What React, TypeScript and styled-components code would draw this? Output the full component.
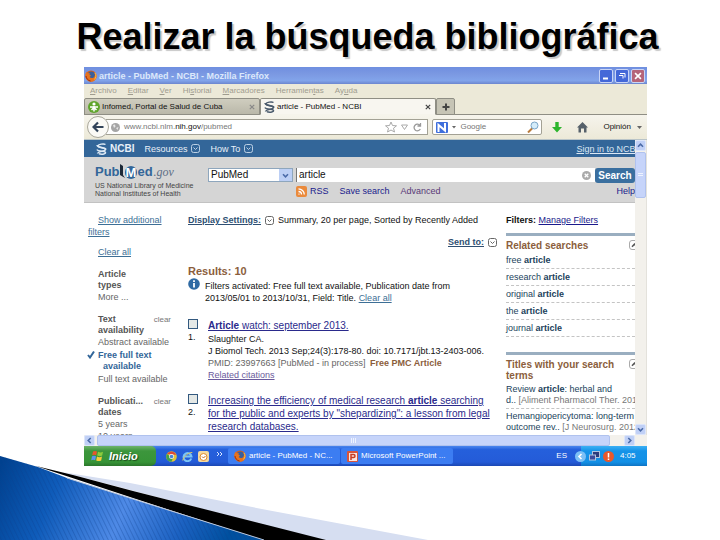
import React from "react";
import styled, { createGlobalStyle, css } from "styled-components";

const Global = createGlobalStyle`
  *, *::before, *::after { box-sizing: border-box; }
  html, body { margin: 0; padding: 0; }
  body { background: #fff; font-family: "Liberation Sans", Arial, sans-serif; font-size: 9px; line-height: 12px; color: #111; }
  button, input, select { font: inherit; color: inherit; margin: 0; padding: 0; border: 0; background: none; border-radius: 0; }
  h1, h2, h3, p, ul { margin: 0; padding: 0; font: inherit; list-style: none; }
  svg { display: block; flex: none; }
`;

const Slide = styled.main`
  position: relative;
  min-height: 100vh;
  padding: 16px 73px 0 84px;
  overflow: hidden;
`;

const SlideTitle = styled.h1`
  && { font-size: 36px; line-height: 42px; font-weight: 700; margin: 0 -24px 9px -20px; }
  color: #000;
  text-align: center;
  white-space: nowrap;
  text-shadow: 2px 2px 1px #c8c8c8;
`;

const Swoosh = styled.svg`
  position: absolute;
  left: 0;
  bottom: 0;
`;

const Screen = styled.section`
  position: relative;
  display: flex;
  flex-direction: column;
  min-width: 0;
`;

const TitleBar = styled.header`
  display: flex;
  align-items: center;
  height: 17px;
  padding: 0 2px 0 1px;
  gap: 2px;
  color: #dce8fb;
  font-weight: 700;
  white-space: nowrap;
  background: linear-gradient(#6f8fe0, #7b98e2 40%, #82a4ea 80%, #6c86cf);
`;

const Grow = styled.span`
  flex: 1;
`;

const WinButton = styled.button<{ $close?: boolean }>`
  && {
    display: grid;
    place-items: center;
    width: 14px;
    height: 14px;
    border: 1px solid #c9d5f6;
    border-radius: 2px;
    background: ${(p) => (p.$close ? "#b5657a" : "#4468d8")};
  }
`;

const MenuBar = styled.nav`
  display: flex;
  gap: 11px;
  height: 14px;
  padding: 0 6px;
  align-items: center;
  font-size: 8px;
  background: #ece9d8;
`;

const MenuItem = styled.button`
  && { color: #9f9c8f; }
  line-height: 14px;
  u { text-decoration-thickness: 1px; }
`;

const TabBar = styled.div`
  display: flex;
  height: 17px;
  font-size: 8px;
  background: #ece9d8;
  border-bottom: 1px solid #8f8e84;
`;

const Tab = styled.button<{ $active?: boolean }>`
  && {
    display: flex;
    align-items: center;
    gap: 2px;
    flex: 0 1 176px;
    padding: 0 4px 0 3px;
    height: 17px;
    white-space: nowrap;
    color: #111;
    border: 1px solid #8f8e84;
    border-bottom-color: ${(p) => (p.$active ? "#f6f4ec" : "#8f8e84")};
    border-radius: 2px 2px 0 0;
    background: ${(p) => (p.$active ? "#f8f6f0" : "linear-gradient(#cfcdbf, #bab8a9)")};
  }
`;

const NewTab = styled(Tab)`
  && { flex: 0 0 19px; justify-content: center; padding: 0; background: #c6c4b5; border-bottom-color: #8f8e84; }
`;

const NavBar = styled.div`
  display: flex;
  align-items: center;
  height: 25px;
  padding: 0 5px 0 3px;
  font-size: 8px;
  background: linear-gradient(#f6f4ec, #ece9d8);
  border-bottom: 1px solid #b9c4c8;
`;

const BackButton = styled.button`
  && {
    display: grid;
    place-items: center;
    width: 22px;
    height: 22px;
    border: 1px solid #a9a79b;
    border-radius: 50%;
    background: #fbfaf6;
    z-index: 1;
  }
`;

const Field = styled.label<{ $search?: boolean }>`
  display: flex;
  align-items: center;
  gap: 4px;
  height: 16px;
  min-width: 0;
  background: #fff;
  border: 1px solid #a3a195;
  ${(p) =>
    p.$search
      ? css`flex: 0 0 110px; margin-left: 4px; padding: 0 2px 0 3px; border-radius: 2px;`
      : css`flex: 1; margin-left: -3px; padding: 0 4px 0 5px; border-left: 0;`}
  input { flex: 1; min-width: 0; width: 0; outline: 0; }
`;

const Url = styled.a`
  flex: 1;
  color: #777;
  text-decoration: none;
  b { color: #111; font-weight: 400; }
`;

const Plain = styled.button`
  display: grid;
  place-items: center;
`;

const NavTools = styled.div`
  display: flex;
  align-items: center;
  gap: 15px;
  padding-left: 10px;
`;

const Opinion = styled.button`
  display: flex;
  align-items: center;
  gap: 6px;
`;

const Viewport = styled.div`
  display: grid;
  grid-template-columns: minmax(0, 1fr) 12px;
`;

const Page = styled.div`
  overflow: hidden;
  background: #fff;
  height: 295px;
`;

const NcbiBar = styled.div`
  display: flex;
  align-items: center;
  gap: 10px;
  height: 17px;
  padding-left: 12px;
  color: #e8f0f8;
  background: #336699;
  white-space: nowrap;
`;

const NcbiLogo = styled.a`
  display: flex;
  align-items: center;
  gap: 3px;
  color: #e8f0f8;
  font-size: 10px;
  font-weight: 700;
  text-decoration: none;
`;

const NcbiMenu = styled.button`
  display: flex;
  align-items: center;
  gap: 4px;
`;

const SignIn = styled.a`
  margin-left: auto;
  margin-right: -3px;
  color: #dce8f4;
`;

const SearchBand = styled.form`
  display: grid;
  grid-template-columns: 124px minmax(0, 1fr) 40px;
  height: 46px;
  background: #d5d5d5;
  border-bottom: 1px solid #c2c2c2;
`;

const Brand = styled.div`
  padding: 5px 0 0 11px;
  font-size: 7px;
  line-height: 8px;
  color: #444;
  white-space: nowrap;
`;

const PubMed = styled.a`
  display: flex;
  align-items: center;
  height: 20px;
  color: #336699;
  font-size: 13px;
  font-weight: 700;
  text-decoration: none;
  i { margin-left: 1px; font: italic 12px "Liberation Serif", serif; color: #5d6f86; }
`;

const BigM = styled.span`
  padding: 0 1px;
  line-height: 13px;
  color: #fff;
  border-radius: 6px;
  background: #336699;
`;

const SearchMiddle = styled.div`
  display: flex;
  flex-direction: column;
  padding-top: 11px;
  gap: 3px;
`;

const SearchLine = styled.div`
  display: flex;
  gap: 3px;
`;

const DbWrap = styled.div`
  display: grid;
  grid-template-columns: 70px 13px;
  height: 14px;
  font-size: 10px;
  border: 1px solid #8ea6bd;
  background: #fff;
  select { grid-area: 1 / 1 / 2 / 3; appearance: none; padding-left: 2px; line-height: 12px; outline: 0; }
`;

const DropArrow = styled.span`
  grid-area: 1 / 2;
  display: grid;
  place-items: center;
  background: #bccff5;
  pointer-events: none;
`;

const TermField = styled.div`
  display: flex;
  align-items: center;
  flex: 1;
  min-width: 0;
  height: 14px;
  padding: 0 4px 0 2px;
  font-size: 10px;
  border-left: 1px solid #777;
  background: #fff;
  input { flex: 1; min-width: 0; outline: 0; }
`;

const LinkLine = styled.div`
  display: flex;
  align-items: center;
  gap: 11px;
  padding-left: 88px;
  white-space: nowrap;
`;

const ToolLink = styled.a<{ $visited?: boolean }>`
  display: flex;
  align-items: center;
  gap: 3px;
  color: ${(p) => (p.$visited ? "#5a3a78" : "#1a1a8c")};
  text-decoration: none;
`;

const SearchSide = styled.div`
  display: flex;
  flex-direction: column;
  align-items: flex-end;
  gap: 2px;
  padding-top: 11px;
  a { color: #1a1a8c; text-decoration: none; }
`;

const SearchButton = styled.button`
  && {
    width: 40px;
    height: 15px;
    font-size: 10px;
    font-weight: 700;
    color: #fff;
    border-radius: 3px;
    background: #3a6f9f;
  }
`;

const Columns = styled.div`
  display: grid;
  grid-template-columns: 104px minmax(0, 1fr) 129px;
  padding-top: 11px;
  white-space: nowrap;
`;

const Sidebar = styled.aside`
  padding: 0 10px 0 14px;
  color: #666;
`;

const SideLink = styled.a<{ $hang?: boolean }>`
  display: block;
  color: #3d6f96;
  margin-bottom: 8px;
  ${(p) => p.$hang && css`margin-left: -10px; text-indent: 10px;`}
`;

const FilterGroup = styled.section`
  margin-top: 11px;
`;

const FilterHead = styled.h3`
  && { font-weight: 700; line-height: 11px; }
  display: flex;
  justify-content: space-between;
  color: #555;
  a { font-weight: 400; font-size: 8px; color: #777; text-decoration: none; margin-right: 7px; }
`;

const FilterItem = styled.a<{ $on?: boolean }>`
  display: flex;
  gap: 3px;
  color: #666;
  text-decoration: none;
  ${(p) =>
    p.$on &&
    css`
      color: #336699;
      font-weight: 700;
      line-height: 11px;
      margin: 1px 0 1px -11px;
      padding: 1px 0 0;
      span { padding-left: 5px; text-indent: -5px; }
    `}
`;

const Results = styled.section`
  padding-right: 9px;
`;

const SettingsLine = styled.div<{ $end?: boolean }>`
  display: flex;
  align-items: center;
  gap: 4px;
  justify-content: ${(p) => (p.$end ? "flex-end" : "flex-start")};
  margin-bottom: ${(p) => (p.$end ? 16 : 10)}px;
  a { font-weight: 700; color: #2f4f72; }
`;

const ResultsTitle = styled.h2`
  && { font-size: 11px; line-height: 14px; font-weight: 700; }
  color: #8b5e3c;
`;

const Notice = styled.div`
  display: flex;
  gap: 5px;
  margin-bottom: 15px;
  p { padding-top: 2px; }
  a { color: #3d6f96; }
`;

const Result = styled.article`
  display: grid;
  grid-template-columns: 15px minmax(0, 1fr);
  column-gap: 5px;
  margin-bottom: 13px;
`;

const Pick = styled.label`
  display: flex;
  flex-direction: column;
  gap: 2px;
  input { appearance: none; width: 10px; height: 10px; border: 1px solid #33597f; background: #e4e8e6; }
`;

const ResultLink = styled.a`
  display: block;
  font-size: 10px;
  line-height: 13px;
  color: #2a2a8c;
  margin-bottom: 1px;
`;

const ResultText = styled.p<{ $muted?: boolean }>`
  color: ${(p) => (p.$muted ? "#666" : "#111")};
  b { color: #8b5e3c; margin-left: 2px; }
  a { color: #6a5a9c; }
`;

const Discovery = styled.aside`
  a { color: #223f5c; text-decoration: none; }
`;

const FiltersLine = styled.p`
  && { margin-bottom: 7px; }
  a { color: #1a1a8c; text-decoration: underline; }
`;

const Portlet = styled.section`
  border-top: 3px solid #9aaec0;
  padding-top: 4px;
  margin-bottom: 15px;
`;

const PortletTitle = styled.h3`
  && { font-size: 10px; line-height: 11px; font-weight: 700; margin-bottom: 1px; }
  display: flex;
  justify-content: space-between;
  align-items: flex-start;
  color: #8b5e3c;
`;

const Collapse = styled.button`
  && { border: 1px solid #aaa; border-radius: 3px; }
  display: grid;
  place-items: center;
  width: 10px;
  height: 10px;
  margin-right: -4px;
`;

const PortletRow = styled.li<{ $tight?: boolean }>`
  padding: 2px 0;
  border-bottom: 1px dashed #c4c4c4;
  line-height: ${(p) => (p.$tight ? 11 : 12)}px;
  span { color: #777; }
`;

const VScroll = styled.div`
  display: flex;
  flex-direction: column;
  gap: 1px;
  background: #f3f1ec;
  border-right: 1px solid #e4e2dc;
`;

const HScroll = styled.div`
  display: flex;
  gap: 2px;
  height: 11px;
  padding-right: 12px;
  background: #f3f1ec;
`;

const ScrollButton = styled.button`
  && { display: grid; place-items: center; width: 11px; height: 11px; border: 1px solid #dce5fb; border-radius: 2px; background: #c0d0f6; }
`;

const Thumb = styled.div<{ $vertical?: boolean }>`
  display: grid;
  place-items: center;
  border: 1px solid #b0c2ee;
  border-radius: 2px;
  background: #c6d4fa;
  ${(p) => (p.$vertical ? css`height: 46px; width: 11px;` : css`flex: 1; margin-right: 12px;`)}
`;

const Taskbar = styled.footer`
  display: flex;
  align-items: stretch;
  height: 20px;
  color: #fff;
  white-space: nowrap;
  background: linear-gradient(#4a86ee, #2560dc 18%, #245bd8 80%, #1c48b4);
`;

const Start = styled.button`
  && {
    display: flex;
    align-items: center;
    gap: 5px;
    width: 72px;
    padding-left: 7px;
    font-size: 11px;
    font-style: italic;
    font-weight: 700;
    color: #fff;
    text-shadow: 1px 1px 1px #1c4a1c;
    border-radius: 0 5px 5px 0;
    background: linear-gradient(#6fb46c, #3c963c 25%, #379437 80%, #2b762b);
  }
`;

const QuickLaunch = styled.div`
  display: flex;
  align-items: center;
  gap: 5px;
  width: 72px;
  padding-left: 10px;
`;

const Task = styled.button`
  && {
    display: flex;
    align-items: center;
    gap: 3px;
    flex: 0 1 112px;
    min-width: 0;
    margin: 2px 1px 2px 0;
    padding-left: 6px;
    font-size: 8px;
    color: #fff;
    border-radius: 2px;
    background: #3c7df2;
  }
`;

const Lang = styled.span`
  align-self: center;
  margin: 0 14px 0 auto;
  font-size: 8px;
`;

const Tray = styled.div`
  display: flex;
  align-items: center;
  gap: 3px;
  width: 66px;
  font-size: 8px;
  background: linear-gradient(#3cb0f4, #1593e8 25%, #1290e6 80%, #0f74c4);
  time { margin-left: 3px; }
  svg:first-child { margin-left: -6px; }
`;

const FirefoxIcon = () => (
  <svg width="12" height="12" viewBox="0 0 12 12">
    <circle cx="6" cy="6" r="5.6" fill="#d9601a" />
    <circle cx="6.3" cy="5" r="3.6" fill="#3a5f9c" />
    <path d="M.6 3.5 2 1.6l.6 1.6 2.2-.3L4.4 4.5 6 5.5 4.6 7c1 1.4 3 1.4 4.2.4 1.4-1 1.6-3 .8-5 2 1.8 2.4 4.3 1.5 6.2C9.8 11 8.2 11.800 6 11.700 2.200 11.500-.2 8 .6 3.500Z" fill="#e8731c" />
    <path d="M10 2.800c1.400 2.200 1.200 5-.6 6.700" fill="none" stroke="#f7c04a" />
    <path d="M1 6c.3 2.600 2 4.600 4.600 5" fill="none" stroke="#9c2c10" />
  </svg>
);

const DnaIcon = ({ color }: { color: string }) => (
  <svg width="11" height="12" viewBox="0 0 11 12" fill="none" stroke={color} strokeWidth="1.500">
    <path d="M9.500 1.500C8 .5 2 1 2 3s7.500 1.300 7.500 3.500S2 8 1.500 10.500" />
    <path d="M1 2c0 3 8.500 2 9 4.500M1 6.500C2 9 9.500 7.500 9.500 9.500S5 11.500 3 10.800" />
  </svg>
);

const Chevron = ({ color = "#4a6aa8", turn = 0 }: { color?: string; turn?: number }) => (
  <svg width="7" height="7" viewBox="0 0 7 7" fill="none" stroke={color} strokeWidth="1.600">
    <path d="M1 2.300 3.500 4.800 6 2.300" transform={`rotate(${turn} 3.500 3.500)`} />
  </svg>
);

const BoxArrow = ({ color = "#666" }: { color?: string }) => (
  <svg width="9" height="9" viewBox="0 0 9 9" fill="none" stroke={color}>
    <rect x=".5" y=".5" width="8" height="8" rx="2" />
    <path d="M2.500 3.500 4.500 5.500 6.500 3.500" />
  </svg>
);

const CloseX = ({ color, size = 6 }: { color: string; size?: number }) => (
  <svg width={size} height={size} viewBox="0 0 6 6" stroke={color} strokeWidth="1.200">
    <path d="M.8.800 5.200 5.200M5.200.800.800 5.200" />
  </svg>
);

const menus: [string, string, string][] = [
  ["", "A", "rchivo"],
  ["", "E", "ditar"],
  ["", "V", "er"],
  ["Hi", "s", "torial"],
  ["", "M", "arcadores"],
  ["Herramien", "t", "as"],
  ["Ay", "u", "da"],
];

const related = ["free", "research", "original", "the", "journal"];

export default function App() {
  return (
    <Slide>
      <Global />
      <Swoosh width="450" height="84" viewBox="0 0 450 84" aria-hidden="true">
        <defs>
          <linearGradient id="blue" gradientUnits="userSpaceOnUse" x1="0" y1="10" x2="220" y2="100">
            <stop offset="0" stopColor="#00418f" />
            <stop offset=".25" stopColor="#0f5cba" />
            <stop offset=".55" stopColor="#4f8ae6" />
            <stop offset=".8" stopColor="#1c62c2" />
            <stop offset="1" stopColor="#00509f" />
          </linearGradient>
          <pattern id="lines" width="4" height="4" patternUnits="userSpaceOnUse" patternTransform="rotate(-26)">
            <path d="M.5 0V4" stroke="#0a3f8c" strokeWidth="1" opacity=".3" />
          </pattern>
        </defs>
        <path d="M62 16 130 27 267 54 428 84H320Z" fill="#d6def1" />
        <path d="M36 10 73 19 133 35 200 52 267 69 326 84H262L133 42Z" fill="#000" />
        <path d="M0 0 38 11 67 22 133 43 264 84H0Z" fill="url(#blue)" />
        <path d="M0 0 38 11 67 22 133 43 264 84H0Z" fill="url(#lines)" />
        <path d="M67 22 133 43 264 84" stroke="#b9c6dc" strokeWidth="1" fill="none" />
      </Swoosh>
      <SlideTitle>Realizar la búsqueda bibliográfica</SlideTitle>

      <Screen>
        <TitleBar>
          <FirefoxIcon />
          <span>article - PubMed - NCBI - Mozilla Firefox</span>
          <Grow />
          <WinButton aria-label="Minimizar">
            <svg width="8" height="8"><path d="M1 6.500H6" stroke="#fff" strokeWidth="2" /></svg>
          </WinButton>
          <WinButton aria-label="Restaurar">
            <svg width="8" height="8" fill="none" stroke="#fff"><path d="M2 1.500H7V5.500M1 3.500H5V6.500" /></svg>
          </WinButton>
          <WinButton $close aria-label="Cerrar"><CloseX color="#fff" size={8} /></WinButton>
        </TitleBar>
        <MenuBar>
          {menus.map(([a, key, b]) => (
            <MenuItem key={a + key + b}>{a}<u>{key}</u>{b}</MenuItem>
          ))}
        </MenuBar>
        <TabBar>
          <Tab>
            <svg width="12" height="12" viewBox="0 0 12 12">
              <circle cx="6" cy="6" r="6" fill="#5fa52c" />
              <circle cx="6" cy="3" r="1.600" fill="#fff" />
              <path d="M2 6h8M6 5v5.500M3.500 9 6 6.500 8.500 9" stroke="#fff" strokeWidth="1.500" fill="none" />
            </svg>
            Infomed, Portal de Salud de Cuba
            <Grow />
            <CloseX color="#888" />
          </Tab>
          <Tab $active>
            <DnaIcon color="#4a5a6c" />
            article - PubMed - NCBI
            <Grow />
            <CloseX color="#444" />
          </Tab>
          <NewTab aria-label="Nueva pestaña">
            <svg width="8" height="8"><path d="M4 .5V7.500M.5 4H7.500" stroke="#444" strokeWidth="2" /></svg>
          </NewTab>
        </TabBar>
        <NavBar>
          <BackButton aria-label="Atrás">
            <svg width="12" height="12" viewBox="0 0 12 12" fill="none" stroke="#33445a" strokeWidth="2.200"><path d="M11.500 6H2M6 1.500 1.500 6 6 10.500" /></svg>
          </BackButton>
          <Field as="div">
            <svg width="9" height="9" viewBox="0 0 9 9"><circle cx="4.500" cy="4.500" r="4.500" fill="#a5a5a5" /><path d="M2 2 4 1.500 4.500 3.500 3 5ZM5 5 7.500 4 6.500 7Z" fill="#e6e6e6" /></svg>
            <Url href="#url">www.ncbi.nlm.<b>nih.gov</b>/pubmed</Url>
            <svg width="38" height="12" viewBox="0 0 38 12" fill="none" stroke="#aaa">
              <path d="M6 1 7.500 4.500 11.500 4.800 8.500 7.200 9.500 11 6 9 2.500 11 3.500 7.200.500 4.800 4.500 4.500Z" />
              <path d="M16.500 4H22.500L19.500 8.500Z" />
              <path d="M35 4.500A3.300 3.300 0 1 0 35.300 8M35.500 2V5H32.500" stroke="#999" strokeWidth="1.300" />
            </svg>
          </Field>
          <Field $search>
            <svg width="12" height="11"><rect width="12" height="11" rx="1" fill="#3f6fdc" /><path d="M2.500 10V3L9 8.500V1" stroke="#fff" strokeWidth="2" fill="none" /></svg>
            <svg width="4" height="3"><path d="M0 0H4L2 2.500Z" fill="#666" /></svg>
            <input aria-label="Buscar en Google" placeholder="Google" />
            <svg width="12" height="12" fill="none"><path d="M6 6.500 1 11.500" stroke="#b97b3c" strokeWidth="2" /><circle cx="7.500" cy="4.500" r="3.500" fill="#d4ecfa" stroke="#7aa6c8" /></svg>
          </Field>
          <NavTools>
            <Plain aria-label="Descargas"><svg width="10" height="11"><path d="M3.300 0H6.700V5H10L5 10.500 0 5H3.300Z" fill="#2cb52c" /></svg></Plain>
            <Plain aria-label="Inicio"><svg width="11" height="11"><path d="M5.500 0 11 5.500H9.500V10.500H7V6.500H4V10.500H1.500V5.500H0Z" fill="#56616a" /></svg></Plain>
            <Opinion>Opinión <svg width="5" height="3"><path d="M0 0H5L2.500 3Z" fill="#666" /></svg></Opinion>
          </NavTools>
        </NavBar>

        <Viewport>
          <Page>
            <NcbiBar>
              <NcbiLogo href="#ncbi"><DnaIcon color="#dfeaf5" />NCBI</NcbiLogo>
              <NcbiMenu>Resources <BoxArrow color="#bcd0e4" /></NcbiMenu>
              <NcbiMenu>How To <BoxArrow color="#bcd0e4" /></NcbiMenu>
              <SignIn href="#signin">Sign in to NCBI</SignIn>
            </NcbiBar>
            <SearchBand onSubmit={(e) => e.preventDefault()}>
              <Brand>
                <PubMed href="#pubmed">
                  Pub
                  <svg width="5" height="18" viewBox="0 0 5 18"><path d="M0 1 3 3V12L5 15 0 12Z" fill="#1d2a38" /></svg>
                  <BigM>M</BigM>ed<i>.gov</i>
                </PubMed>
                US National Library of Medicine<br />National Institutes of Health
              </Brand>
              <SearchMiddle>
                <SearchLine>
                  <DbWrap>
                    <select aria-label="Base de datos"><option>PubMed</option></select>
                    <DropArrow><Chevron /></DropArrow>
                  </DbWrap>
                  <TermField>
                    <input aria-label="Término" defaultValue="article" />
                    <svg width="9" height="9"><circle cx="4.500" cy="4.500" r="4.500" fill="#aaa" /><path d="M2.700 2.700 6.300 6.300M6.300 2.700 2.700 6.300" stroke="#fff" strokeWidth="1.300" /></svg>
                  </TermField>
                </SearchLine>
                <LinkLine>
                  <ToolLink href="#rss">
                    <svg width="11" height="11" fill="none" stroke="#fff" strokeWidth="1.300"><rect width="11" height="11" rx="2" fill="#ea8a3c" stroke="none" /><path d="M2.500 5.500A3 3 0 0 1 5.500 8.500M2.500 2.800A6 6 0 0 1 8.300 8.500M2.500 8.200H3.500" /></svg>
                    RSS
                  </ToolLink>
                  <ToolLink href="#save">Save search</ToolLink>
                  <ToolLink href="#advanced" $visited>Advanced</ToolLink>
                </LinkLine>
              </SearchMiddle>
              <SearchSide>
                <SearchButton>Search</SearchButton>
                <a href="#help">Help</a>
              </SearchSide>
            </SearchBand>

            <Columns>
              <Sidebar>
                <SideLink $hang href="#more">Show additional<br />filters</SideLink>
                <SideLink href="#clear">Clear all</SideLink>
                <FilterGroup>
                  <FilterHead>Article<br />types</FilterHead>
                  <FilterItem href="#types">More ...</FilterItem>
                </FilterGroup>
                <FilterGroup>
                  <FilterHead><span>Text<br />availability</span><a href="#c1">clear</a></FilterHead>
                  <FilterItem href="#abs">Abstract available</FilterItem>
                  <FilterItem $on href="#free">
                    <svg width="8" height="9" fill="none" stroke="#336699" strokeWidth="2"><path d="M1 5 3 7.500 7 1.500" /></svg>
                    <span>Free full text<br />available</span>
                  </FilterItem>
                  <FilterItem href="#full">Full text available</FilterItem>
                </FilterGroup>
                <FilterGroup>
                  <FilterHead><span>Publicati...<br />dates</span><a href="#c2">clear</a></FilterHead>
                  <FilterItem href="#y5">5 years</FilterItem>
                  <FilterItem href="#y10">10 years</FilterItem>
                </FilterGroup>
              </Sidebar>

              <Results>
                <SettingsLine>
                  <a href="#display">Display Settings:</a><BoxArrow />
                  <span>Summary, 20 per page, Sorted by Recently Added</span>
                </SettingsLine>
                <SettingsLine $end><a href="#send">Send to:</a><BoxArrow /></SettingsLine>
                <ResultsTitle>Results: 10</ResultsTitle>
                <Notice>
                  <svg width="12" height="12"><circle cx="6" cy="6" r="5.800" fill="#2f6aa3" /><path d="M6 5V9.500M6 2.300V4" stroke="#fff" strokeWidth="1.800" /></svg>
                  <p>
                    Filters activated: Free full text available, Publication date from<br />
                    2013/05/01 to 2013/10/31, Field: Title. <a href="#clearall">Clear all</a>
                  </p>
                </Notice>
                <Result>
                  <Pick><input type="checkbox" />1.</Pick>
                  <div>
                    <ResultLink href="#r1"><b>Article</b> watch: september 2013.</ResultLink>
                    <ResultText>Slaughter CA.</ResultText>
                    <ResultText>J Biomol Tech. 2013 Sep;24(3):178-80. doi: 10.7171/jbt.13-2403-006.</ResultText>
                    <ResultText $muted>PMID: 23997663 [PubMed - in process] <b>Free PMC Article</b></ResultText>
                    <ResultText><a href="#cit">Related citations</a></ResultText>
                  </div>
                </Result>
                <Result>
                  <Pick><input type="checkbox" />2.</Pick>
                  <ResultLink href="#r2">
                    Increasing the efficiency of medical research <b>article</b> searching<br />
                    for the public and experts by "shepardizing": a lesson from legal<br />
                    research databases.
                  </ResultLink>
                </Result>
              </Results>

              <Discovery>
                <FiltersLine><b>Filters:</b> <a href="#manage">Manage Filters</a></FiltersLine>
                <Portlet>
                  <PortletTitle>Related searches<Collapse aria-label="Contraer"><Chevron color="#555" turn={180} /></Collapse></PortletTitle>
                  <ul>
                    {related.map((word) => (
                      <PortletRow key={word}><a href={"#" + word}>{word} <b>article</b></a></PortletRow>
                    ))}
                  </ul>
                </Portlet>
                <Portlet>
                  <PortletTitle><span>Titles with your search<br />terms</span><Collapse aria-label="Contraer"><Chevron color="#555" turn={180} /></Collapse></PortletTitle>
                  <ul>
                    <PortletRow $tight><a href="#t1">Review <b>article</b>: herbal and<br />d.. <span>[Aliment Pharmacol Ther. 2012]</span></a></PortletRow>
                    <PortletRow $tight><a href="#t2">Hemangiopericytoma: long-term<br />outcome rev.. <span>[J Neurosurg. 2012]</span></a></PortletRow>
                  </ul>
                </Portlet>
              </Discovery>
            </Columns>
          </Page>
          <VScroll>
            <ScrollButton aria-label="Subir"><Chevron turn={180} /></ScrollButton>
            <Thumb $vertical><svg width="5" height="4"><path d="M0 .5H5M0 2.500H5" stroke="#eef3ff" /></svg></Thumb>
            <Grow />
            <ScrollButton aria-label="Bajar"><Chevron /></ScrollButton>
          </VScroll>
        </Viewport>
        <HScroll>
          <ScrollButton aria-label="Izquierda"><Chevron turn={90} /></ScrollButton>
          <Thumb><svg width="6" height="5"><path d="M.5 0V5M2.500 0V5M4.500 0V5" stroke="#eef3ff" /></svg></Thumb>
          <ScrollButton aria-label="Derecha"><Chevron turn={-90} /></ScrollButton>
        </HScroll>

        <Taskbar>
          <Start>
            <svg width="13" height="12" viewBox="0 0 13 12">
              <path d="M2 1.500Q4 .3 6 1.500L5.200 5.300Q3 4.300 1.200 5.300Z" fill="#e8562c" />
              <path d="M7 1.800Q9.500 3 12 1.800L11.200 5.600Q9 6.800 6.200 5.600Z" fill="#8ccc3c" />
              <path d="M1 6.300Q3 5.300 5 6.300L4.200 10.200Q2 9.200.200 10.200Z" fill="#5c94ec" />
              <path d="M6 6.600Q8.500 7.800 11 6.600L10.200 10.400Q8 11.600 5.200 10.400Z" fill="#f6cc3c" />
            </svg>
            Inicio
          </Start>
          <QuickLaunch>
            <svg width="11" height="11" viewBox="0 0 12 12"><circle cx="6" cy="6" r="5.800" fill="#e2c43a" /><path d="M1 3.200A5.800 5.800 0 0 1 11.300 4H6Z" fill="#dc4a38" /><path d="M1 3.200A5.800 5.800 0 0 0 6 11.800L7.500 8Z" fill="#3fa04c" /><circle cx="6" cy="6" r="2.700" fill="#fff" /><circle cx="6" cy="6" r="2" fill="#4a84d8" /></svg>
            <svg width="11" height="11" fill="none"><path d="M9.300 7.500A4 4 0 1 1 9.500 5.500H2.500" stroke="#7cc4f6" strokeWidth="2" /><path d="M.8 9.500C1 6 7 1 10.300 1.500" stroke="#d8c46a" /></svg>
            <svg width="11" height="11" fill="none"><rect width="11" height="11" rx="2" fill="#f3d9a0" /><circle cx="5.500" cy="6" r="3.500" stroke="#e08a2c" fill="#fff" /><path d="M4 5.500 5.500 7 7.500 5" stroke="#c8701c" /></svg>
            <svg width="9" height="10" fill="none" stroke="#d8e6ff"><path d="M3 1 5 3 3 5M6 1 8 3 6 5" /></svg>
          </QuickLaunch>
          <Task><FirefoxIcon />article - PubMed - NC...</Task>
          <Task>
            <svg width="11" height="11" fill="none"><rect width="11" height="11" rx="1" fill="#d8543c" /><rect x="2" y="2" width="8" height="8" fill="#fbe6e0" /><path d="M4 9V3.500H6.500A1.500 1.500 0 0 1 6.500 6.500H4" stroke="#c83c24" strokeWidth="1.500" /></svg>
            Microsoft PowerPoint ...
          </Task>
          <Lang>ES</Lang>
          <Tray>
            <svg width="11" height="11" fill="none"><circle cx="5.500" cy="5.500" r="5.500" fill="#7cc0f6" /><path d="M6.500 3 4 5.500 6.500 8" stroke="#fff" strokeWidth="1.600" /></svg>
            <svg width="11" height="11"><rect x="3.500" y=".5" width="7" height="6" fill="#2c3c7c" stroke="#b4c4dc" /><rect x=".5" y="4" width="6" height="5" fill="#3c4c9c" stroke="#b4c4dc" /></svg>
            <svg width="11" height="11"><circle cx="5.500" cy="5.500" r="5.500" fill="#e8582c" /><path d="M5.500 2V6.500M5.500 7.500V9" stroke="#fff" strokeWidth="1.500" /></svg>
            <time>4:05</time>
          </Tray>
        </Taskbar>
      </Screen>
    </Slide>
  );
}
